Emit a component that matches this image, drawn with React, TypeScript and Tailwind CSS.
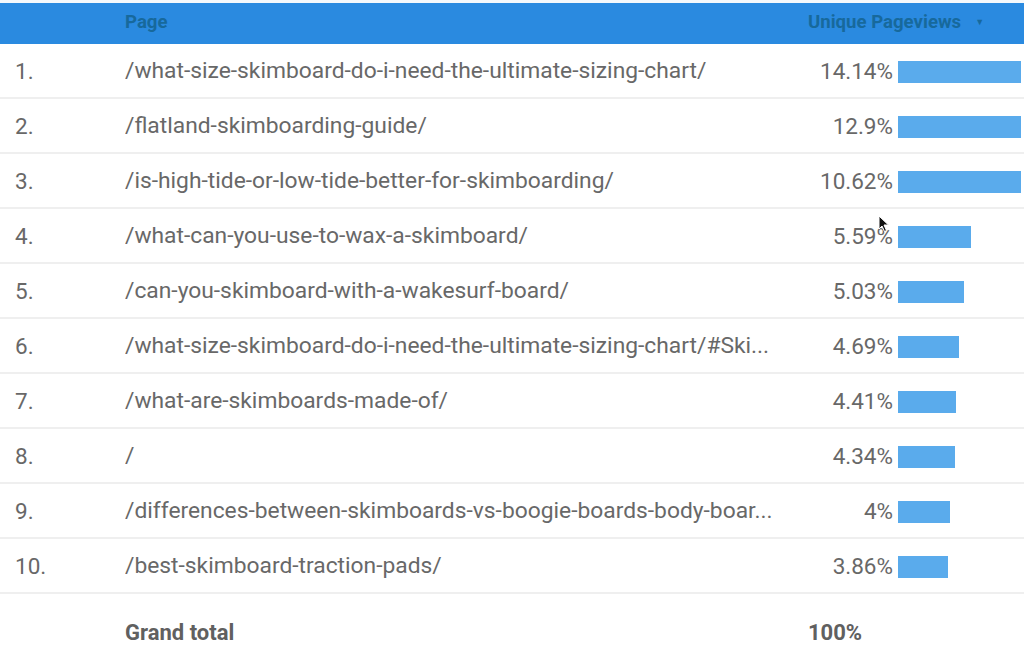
import React from "react";

const rows = [
  { n: "1.", page: "/what-size-skimboard-do-i-need-the-ultimate-sizing-chart/", pct: "14.14%", v: 14.14 },
  { n: "2.", page: "/flatland-skimboarding-guide/", pct: "12.9%", v: 12.9 },
  { n: "3.", page: "/is-high-tide-or-low-tide-better-for-skimboarding/", pct: "10.62%", v: 10.62 },
  { n: "4.", page: "/what-can-you-use-to-wax-a-skimboard/", pct: "5.59%", v: 5.59 },
  { n: "5.", page: "/can-you-skimboard-with-a-wakesurf-board/", pct: "5.03%", v: 5.03 },
  { n: "6.", page: "/what-size-skimboard-do-i-need-the-ultimate-sizing-chart/#Ski...", pct: "4.69%", v: 4.69 },
  { n: "7.", page: "/what-are-skimboards-made-of/", pct: "4.41%", v: 4.41 },
  { n: "8.", page: "/", pct: "4.34%", v: 4.34 },
  { n: "9.", page: "/differences-between-skimboards-vs-boogie-boards-body-boar...", pct: "4%", v: 4 },
  { n: "10.", page: "/best-skimboard-traction-pads/", pct: "3.86%", v: 3.86 },
];

export default function App() {
  return (
    <div
      className="relative w-[1024px] h-[660px] overflow-hidden bg-white text-[#686868]"
      style={{ fontFamily: "Roboto, 'Liberation Sans', sans-serif" }}
    >
      <div className="h-[3px] bg-[#f4f8fc]" />
      <div className="flex h-[41px] items-center bg-[#2a8ae0] pb-[2px] text-[18.6px] font-bold text-[#17699c]">
        <div className="w-[125px]" />
        <div className="w-[683px]">Page</div>
        <div className="flex items-center">
          <span>Unique Pageviews</span>
          <span className="ml-[14px] text-[9px]">▼</span>
        </div>
      </div>
      {rows.map((r) => (
        <div key={r.n} className="flex h-[55px] items-center border-b-2 border-[#efefef] pt-[2px] text-[22.5px]">
          <div className="w-[125px] pl-[15px]">{r.n}</div>
          <div className="w-[650px] whitespace-nowrap overflow-hidden text-[22.8px]">{r.page}</div>
          <div className="w-[118px] text-right">{r.pct}</div>
          <div className="ml-[5px] flex h-[22px] w-[123px] overflow-hidden">
            <div className="h-full shrink-0 bg-[#5aabec]" style={{ width: `${r.v * 13.05}px` }} />
          </div>
        </div>
      ))}
      <div className="flex h-[66px] items-center pt-[10px] text-[22px] font-bold text-[#606060]">
        <div className="w-[125px]" />
        <div className="w-[683px]">Grand total</div>
        <div>100%</div>
      </div>
      <svg className="absolute left-[878px] top-[215px]" width="12" height="18" viewBox="0 0 12 18">
        <path d="M1 1 L1 14 L4 11 L6.5 16.5 L8.5 15.5 L6 10 L10.5 10 Z" fill="#111" stroke="#fff" strokeWidth="1" />
      </svg>
    </div>
  );
}
